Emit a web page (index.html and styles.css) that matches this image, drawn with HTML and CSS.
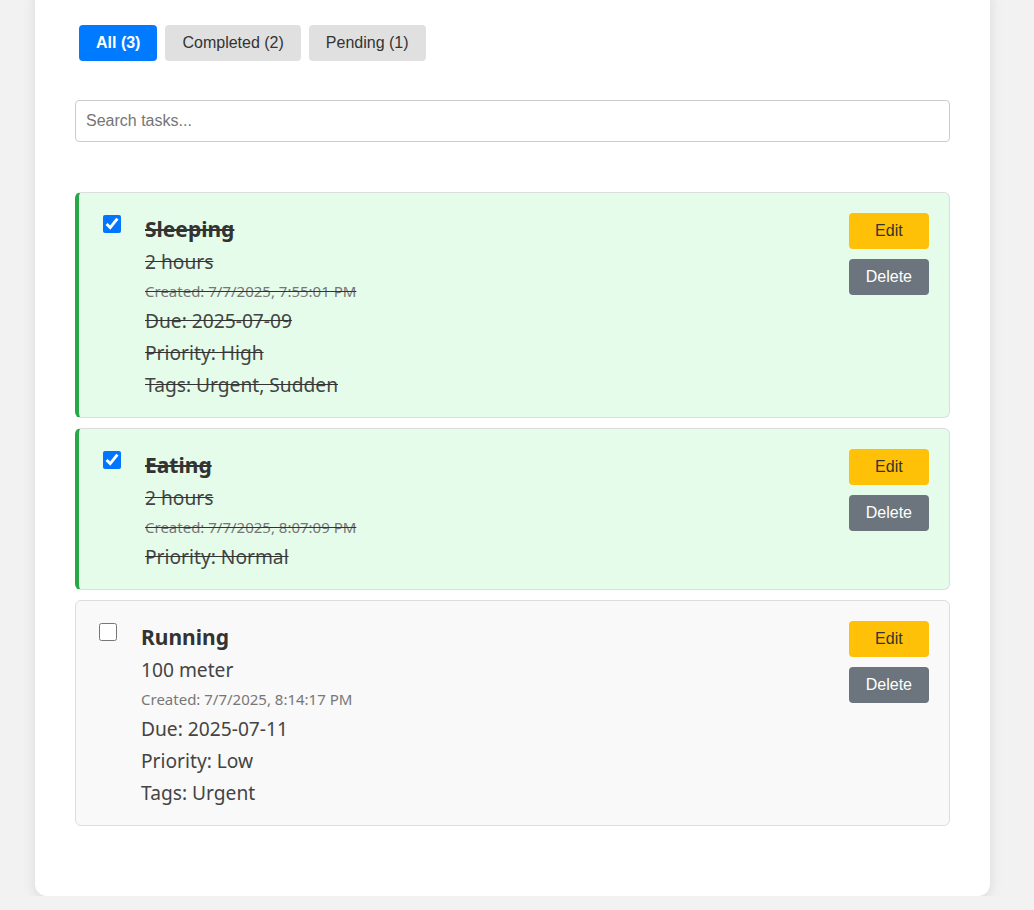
FILE: index.html
```html
<!DOCTYPE html>
<html lang="en">
<head>
<meta charset="utf-8">
<title>Tasks</title>
<link rel="stylesheet" href="styles.css">
</head>
<body>
<div class="container">
  <div class="filters">
    <button class="filter active">All (3)</button>
    <button class="filter">Completed (2)</button>
    <button class="filter">Pending (1)</button>
  </div>
  <input class="search" type="text" placeholder="Search tasks...">
  <div class="task-list">
    <div class="task completed">
      <input type="checkbox" class="check" checked>
      <div class="content">
        <div class="title">Sleeping</div>
        <div class="line">2 hours</div>
        <div class="created">Created: 7/7/2025, 7:55:01 PM</div>
        <div class="line">Due: 2025-07-09</div>
        <div class="line">Priority: High</div>
        <div class="line">Tags: Urgent, Sudden</div>
      </div>
      <div class="actions">
        <button class="btn edit">Edit</button>
        <button class="btn delete">Delete</button>
      </div>
    </div>
    <div class="task completed">
      <input type="checkbox" class="check" checked>
      <div class="content">
        <div class="title">Eating</div>
        <div class="line">2 hours</div>
        <div class="created">Created: 7/7/2025, 8:07:09 PM</div>
        <div class="line">Priority: Normal</div>
      </div>
      <div class="actions">
        <button class="btn edit">Edit</button>
        <button class="btn delete">Delete</button>
      </div>
    </div>
    <div class="task">
      <input type="checkbox" class="check">
      <div class="content">
        <div class="title">Running</div>
        <div class="line">100 meter</div>
        <div class="created">Created: 7/7/2025, 8:14:17 PM</div>
        <div class="line">Due: 2025-07-11</div>
        <div class="line">Priority: Low</div>
        <div class="line">Tags: Urgent</div>
      </div>
      <div class="actions">
        <button class="btn edit">Edit</button>
        <button class="btn delete">Delete</button>
      </div>
    </div>
  </div>
</div>
</body>
</html>
```
FILE: styles.css
```css
html, body {
  margin: 0;
  padding: 0;
  background: #f2f2f2;
  font-family: "Liberation Sans", Arial, sans-serif;
}

.container {
  width: 955px;
  box-sizing: border-box;
  margin: -15px 0 0 35px;
  padding: 40px 40px 60px;
  background: #fff;
  border-radius: 12px;
  box-shadow: 0 4px 14px rgba(0, 0, 0, 0.1);
}

.filters {
  display: flex;
  margin-bottom: 39px;
}

.filter {
  margin: 0 4px;
  height: 36px;
  padding: 0 17px;
  border: none;
  border-radius: 4px;
  background: #e0e0e0;
  color: #333;
  font-family: "Liberation Sans", Arial, sans-serif;
  font-size: 16px;
}

.filter.active {
  background: #007bff;
  color: #fff;
  font-weight: bold;
}

.search {
  display: block;
  width: 100%;
  height: 42px;
  box-sizing: border-box;
  padding: 10px;
  border: 1px solid #ccc;
  border-radius: 4px;
  font-family: "Liberation Sans", Arial, sans-serif;
  font-size: 16px;
  color: #333;
}

.search::placeholder {
  color: #757575;
}

.task-list {
  margin-top: 50px;
}

.task {
  display: flex;
  align-items: flex-start;
  padding: 20px 20px 16px;
  margin-bottom: 10px;
  background: #f9f9f9;
  border: 1px solid #ddd;
  border-radius: 6px;
}

.task.completed {
  background: #e6fcea;
  border-left: 4px solid #28a745;
}

.check {
  width: 18px;
  height: 18px;
  margin: 2px 3px 3px 4px;
  flex: none;
}

.task:not(.completed) .check {
  margin-left: 3px;
}

.content {
  flex: 1;
  padding-left: 21px;
  font-family: "Noto Sans", "Open Sans", sans-serif;
  color: #444;
}

.task.completed .content {
  text-decoration: line-through;
  text-decoration-color: #333;
}

.title {
  font-size: 21px;
  font-weight: bold;
  line-height: 33px;
  color: #333;
}

.line {
  font-size: 19.2px;
  line-height: 32px;
  color: #444;
}

.created {
  font-size: 15px;
  line-height: 27px;
  color: #777;
}

.actions {
  display: flex;
  flex-direction: column;
  gap: 10px;
  flex: none;
}

.btn {
  height: 36px;
  padding: 0 17px;
  border: none;
  border-radius: 4px;
  font-family: "Liberation Sans", Arial, sans-serif;
  font-size: 16px;
}

.btn.edit {
  background: #ffc107;
  color: #333;
}

.btn.delete {
  background: #6c757d;
  color: #fff;
}
```
